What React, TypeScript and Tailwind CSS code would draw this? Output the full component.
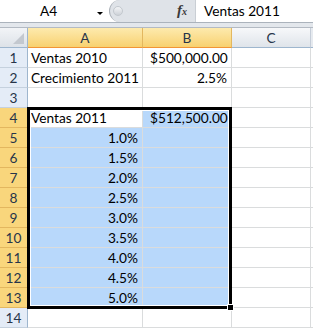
const font = { fontFamily: "Lato, 'Liberation Sans', sans-serif" };

type Cell = { text?: string; align?: "left" | "right"; acct?: string };

const rows: { a?: Cell; b?: Cell }[] = [
  { a: { text: "Ventas 2010" }, b: { acct: "500,000.00" } },
  { a: { text: "Crecimiento 2011" }, b: { text: "2.5%", align: "right" } },
  {},
  { a: { text: "Ventas 2011" }, b: { acct: "512,500.00" } },
  ...["1.0%", "1.5%", "2.0%", "2.5%", "3.0%", "3.5%", "4.0%", "4.5%", "5.0%"].map((t) => ({
    a: { text: t, align: "right" as const },
  })),
  {},
];

function CellContent({ cell }: { cell?: Cell }) {
  if (!cell) return null;
  if (cell.acct) {
    return (
      <div className="flex w-full justify-between pl-[7px] pr-[8px]">
        <span>$</span>
        <span>{cell.acct}</span>
      </div>
    );
  }
  return (
    <div className={`w-full whitespace-nowrap ${cell.align === "right" ? "pr-[4px] text-right" : "pl-[3px]"}`}>
      {cell.text}
    </div>
  );
}

function FormulaBar() {
  return (
    <div className="flex h-[23px] border-b border-[#abb3bc] bg-white text-[13.7px] leading-[16px] text-black">
      <div className="relative flex w-[109px] items-center">
        <span className="ml-[40px]">A4</span>
        <span className="absolute left-[97px] top-[12px] h-0 w-0 border-x-[3px] border-t-[3px] border-x-transparent border-t-black" />
      </div>
      <div className="relative flex w-[86px] items-center rounded-l-[11px] border-l border-[#a9afb6] bg-[#dfe3e8]">
        <span className="ml-[3px] h-[10px] w-[10px] rounded-full border border-[#c3c8ce] bg-gradient-to-b from-[#f4f5f7] to-[#cdd2d8]" />
        <span
          className="ml-auto mr-[8px] text-[15px] font-bold italic text-[#3a3a3a]"
          style={{ fontFamily: "'Liberation Serif', serif" }}
        >
          f<span className="text-[10px]">x</span>
        </span>
      </div>
      <div className="flex flex-1 items-center border-l border-[#c9ced4] pl-[8px]">Ventas 2011</div>
    </div>
  );
}

const colHead = "flex items-center justify-center border-r border-b text-[13.7px] leading-[16px] text-[#27354a]";
const selColHead = `${colHead} border-r-[#e3b75f] border-b-[#f29536] bg-gradient-to-b from-[#fdeaad] to-[#f8d16f]`;
const rowHead = "flex items-end justify-center pb-[1px] border-r border-b text-[13.7px] leading-[16px] text-[#27354a]";
const plainRowHead = `${rowHead} border-r-[#9eb6ce] border-b-[#c5d1de] bg-[#e4ecf7]`;
const selRowHead = `${rowHead} border-r-[#f29536] border-b-[#e3b75f] bg-[#f9d67c]`;
const cellBase = "flex items-end border-r border-b border-[#dadcdd] pb-[1px] text-[13.7px] leading-[16px] text-black";

export default function App() {
  return (
    <div className="h-[330px] w-[313px] overflow-hidden bg-white" style={font}>
      <FormulaBar />
      <div className="h-[5px] border-b border-[#b3bac3] bg-[#e3e7ec]" />
      <div className="relative grid grid-cols-[28px_115px_89px_79px_2px] grid-rows-[repeat(15,20px)]">
        <div className="relative border-r border-b border-[#9eb6ce] bg-gradient-to-b from-[#f2f4f7] to-[#dde2e8]">
          <span
            className="absolute bottom-[3px] right-[3px] h-0 w-0"
            style={{ borderBottom: "11px solid #c3c8cf", borderLeft: "11px solid transparent" }}
          />
        </div>
        <div className={selColHead}>A</div>
        <div className={selColHead}>B</div>
        <div className={`${colHead} border-r-[#c5cdd8] border-b-[#9eb6ce] bg-gradient-to-b from-[#f7f8fa] to-[#dfe4ea]`}>C</div>
        <div className="border-b border-[#9eb6ce] bg-[#e6eaef]" />
        {rows.map((r, i) => {
          const sel = i >= 3 && i <= 12;
          const blueA = sel && i !== 3;
          return [
            <div key={`h${i}`} className={sel ? selRowHead : plainRowHead}>
              {i + 1}
            </div>,
            <div key={`a${i}`} className={`${cellBase} ${blueA ? "bg-[#b8d8fb]" : ""}`}>
              <CellContent cell={r.a} />
            </div>,
            <div key={`b${i}`} className={`${cellBase} ${sel ? "bg-[#b8d8fb]" : ""}`}>
              <CellContent cell={r.b} />
            </div>,
            <div key={`c${i}`} className="border-r border-b border-[#dadcdd]" />,
            <div key={`d${i}`} className="border-b border-[#dadcdd]" />,
          ];
        })}
        <div className="pointer-events-none absolute left-[27px] top-[79px] h-[202px] w-[205px] border-[3px] border-black shadow-[inset_0_0_0_1px_white]" />
        <div className="absolute left-[227px] top-[276px] h-[7px] w-[7px] border border-white bg-black" />
      </div>
    </div>
  );
}
